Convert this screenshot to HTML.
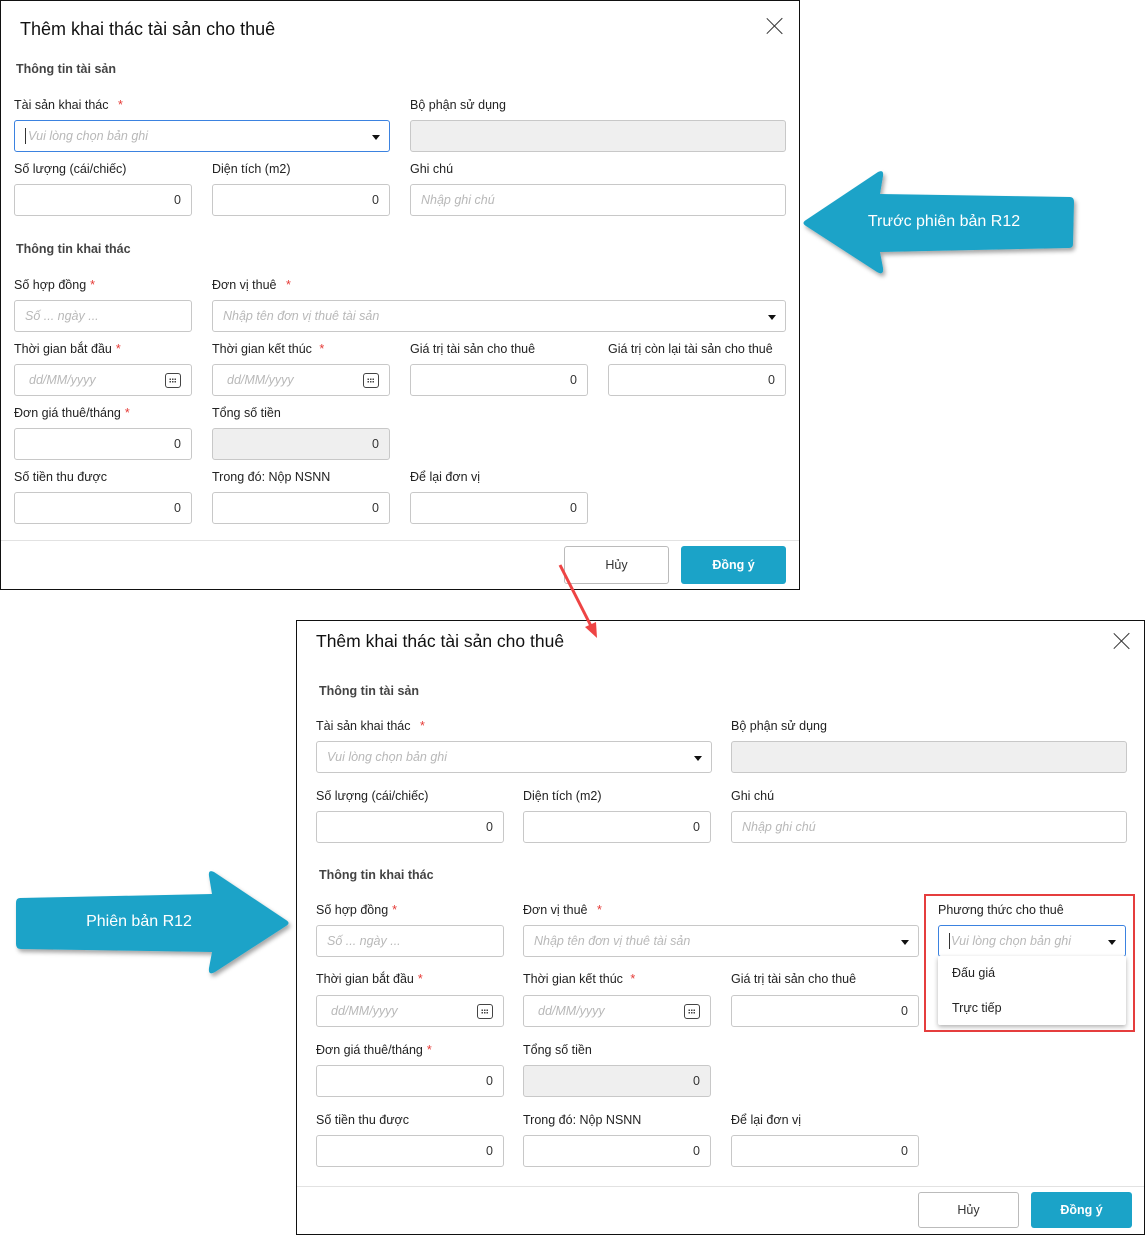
<!DOCTYPE html>
<html><head><meta charset="utf-8"><style>
*{box-sizing:border-box;margin:0;padding:0}
body{width:1145px;height:1235px;position:relative;background:#fff;font-family:"Liberation Sans",Arial,sans-serif;color:#212121;overflow:hidden}
.a{position:absolute}
.dlg{position:absolute;border:1px solid #111;background:#fff}
.t{position:absolute;font-size:18px;color:#111}
.s{position:absolute;font-size:12.5px;font-weight:bold;color:#444}
.l{position:absolute;font-size:12.5px;color:#222;white-space:nowrap}
.l i{color:#e53935;font-style:normal;margin-left:6px}
.f{position:absolute;height:32px;border:1px solid #c8c8c8;border-radius:3px;background:#fff;font-size:12.5px}
.f.g{background:#efefef}
.f.fo{border-color:#3b82e0}
.p{position:absolute;left:10px;top:8px;color:#b8b8b8;font-style:italic;white-space:nowrap}
.n{position:absolute;right:10px;top:8px;color:#333}
.dd{position:absolute;right:9px;top:14px;width:0;height:0;border-left:4px solid transparent;border-right:4px solid transparent;border-top:5px solid #111}
.cal{position:absolute;right:10px;top:8px;width:16px;height:15px;border:1.5px solid #444;border-radius:3px}
.cal:before{content:"";position:absolute;left:3px;top:4px;width:7px;height:5px;background:radial-gradient(circle,#444 0.8px,transparent 1px) 0 0/2.5px 2.5px}
.btn{position:absolute;border-radius:3px;font-size:12.5px;text-align:center}
.hr{position:absolute;height:1px;background:#e2e2e2}
.x{position:absolute;width:18px;height:18px}
.x:before,.x:after{content:"";position:absolute;left:8px;top:-2px;width:1.3px;height:22px;background:#333;transform:rotate(45deg)}
.x:after{transform:rotate(-45deg)}
</style></head><body>

<!-- Dialog 1 -->
<div class="dlg" style="left:0;top:0;width:800px;height:590px"></div>
<div class="t" style="left:20px;top:19px">Thêm khai thác tài sản cho thuê</div>
<div class="x" style="left:766px;top:17px"></div>
<div class="s" style="left:16px;top:62px">Thông tin tài sản</div>
<div class="l" style="left:14px;top:98px">Tài sản khai thác <i>*</i></div>
<div class="l" style="left:410px;top:98px">Bộ phận sử dụng</div>
<div class="f fo" style="left:14px;top:120px;width:376px"><span class="a" style="left:10px;top:7px;width:1px;height:16px;background:#333"></span><span class="p" style="left:13px">Vui lòng chọn bản ghi</span><span class="dd"></span></div>
<div class="f g" style="left:410px;top:120px;width:376px"></div>
<div class="l" style="left:14px;top:162px">Số lượng (cái/chiếc)</div>
<div class="l" style="left:212px;top:162px">Diện tích (m2)</div>
<div class="l" style="left:410px;top:162px">Ghi chú</div>
<div class="f" style="left:14px;top:184px;width:178px"><span class="n">0</span></div>
<div class="f" style="left:212px;top:184px;width:178px"><span class="n">0</span></div>
<div class="f" style="left:410px;top:184px;width:376px"><span class="p">Nhập ghi chú</span></div>
<div class="s" style="left:16px;top:242px">Thông tin khai thác</div>
<div class="l" style="left:14px;top:278px">Số hợp đồng<i style="margin-left:4px">*</i></div>
<div class="l" style="left:212px;top:278px">Đơn vị thuê <i>*</i></div>
<div class="f" style="left:14px;top:300px;width:178px"><span class="p">Số ... ngày ...</span></div>
<div class="f" style="left:212px;top:300px;width:574px"><span class="p">Nhập tên đơn vị thuê tài sản</span><span class="dd"></span></div>
<div class="l" style="left:14px;top:342px">Thời gian bắt đầu<i style="margin-left:4px">*</i></div>
<div class="l" style="left:212px;top:342px">Thời gian kết thúc <i style="margin-left:4px">*</i></div>
<div class="l" style="left:410px;top:342px">Giá trị tài sản cho thuê</div>
<div class="l" style="left:608px;top:342px">Giá trị còn lại tài sản cho thuê</div>
<div class="f" style="left:14px;top:364px;width:178px"><span class="p" style="left:14px">dd/MM/yyyy</span><span class="cal"></span></div>
<div class="f" style="left:212px;top:364px;width:178px"><span class="p" style="left:14px">dd/MM/yyyy</span><span class="cal"></span></div>
<div class="f" style="left:410px;top:364px;width:178px"><span class="n">0</span></div>
<div class="f" style="left:608px;top:364px;width:178px"><span class="n">0</span></div>
<div class="l" style="left:14px;top:406px">Đơn giá thuê/tháng<i style="margin-left:4px">*</i></div>
<div class="l" style="left:212px;top:406px">Tổng số tiền</div>
<div class="f" style="left:14px;top:428px;width:178px"><span class="n">0</span></div>
<div class="f g" style="left:212px;top:428px;width:178px"><span class="n">0</span></div>
<div class="l" style="left:14px;top:470px">Số tiền thu được</div>
<div class="l" style="left:212px;top:470px">Trong đó: Nộp NSNN</div>
<div class="l" style="left:410px;top:470px">Để lại đơn vị</div>
<div class="f" style="left:14px;top:492px;width:178px"><span class="n">0</span></div>
<div class="f" style="left:212px;top:492px;width:178px"><span class="n">0</span></div>
<div class="f" style="left:410px;top:492px;width:178px"><span class="n">0</span></div>
<div class="hr" style="left:1px;top:540px;width:798px"></div>
<div class="btn" style="left:564px;top:546px;width:105px;height:38px;border:1px solid #bbb;line-height:36px;color:#333">Hủy</div>
<div class="btn" style="left:681px;top:546px;width:105px;height:38px;background:#1ba3c8;color:#fff;font-weight:bold;line-height:38px">Đồng ý</div>

<!-- arrow left -->
<svg class="a" style="left:798px;top:164px" width="285" height="118" viewBox="0 0 285 118">
<defs><filter id="sh"><feDropShadow dx="2" dy="3" stdDeviation="2" flood-opacity="0.35"/></filter></defs>
<path d="M8 56 L80 8 Q86 5 85 12 L82 30 L272 33 Q276 33 276 38 L275 80 Q275 84 271 84 L82 88 L85 104 Q86 112 79 108 L8 62 Q3 59 8 56 Z" fill="#1ba3c8" filter="url(#sh)"/>
<text x="146" y="62" fill="#fff" font-family="Liberation Sans, sans-serif" font-size="16" text-anchor="middle">Trước phiên bản R12</text>
</svg>
<!-- arrow right -->
<svg class="a" style="left:10px;top:864px" width="285" height="118" viewBox="0 0 285 118">
<path d="M276 56 L204 8 Q198 5 199 12 L202 30 L10 34 Q6 34 6 39 L6 80 Q6 85 11 85 L202 88 L199 104 Q198 112 205 108 L276 62 Q281 59 276 56 Z" fill="#1ba3c8" filter="url(#sh)"/>
<text x="129" y="62" fill="#fff" font-family="Liberation Sans, sans-serif" font-size="16" text-anchor="middle">Phiên bản R12</text>
</svg>

<!-- Dialog 2 -->
<div class="dlg" style="left:296px;top:620px;width:849px;height:615px"></div>
<div class="t" style="left:316px;top:631px;font-size:17.5px">Thêm khai thác tài sản cho thuê</div>
<div class="x" style="left:1113px;top:632px"></div>
<div class="s" style="left:319px;top:684px">Thông tin tài sản</div>
<div class="l" style="left:316px;top:719px">Tài sản khai thác <i>*</i></div>
<div class="l" style="left:731px;top:719px">Bộ phận sử dụng</div>
<div class="f" style="left:316px;top:741px;width:396px"><span class="p">Vui lòng chọn bản ghi</span><span class="dd"></span></div>
<div class="f g" style="left:731px;top:741px;width:396px"></div>
<div class="l" style="left:316px;top:789px">Số lượng (cái/chiếc)</div>
<div class="l" style="left:523px;top:789px">Diện tích (m2)</div>
<div class="l" style="left:731px;top:789px">Ghi chú</div>
<div class="f" style="left:316px;top:811px;width:188px"><span class="n">0</span></div>
<div class="f" style="left:523px;top:811px;width:188px"><span class="n">0</span></div>
<div class="f" style="left:731px;top:811px;width:396px"><span class="p">Nhập ghi chú</span></div>
<div class="s" style="left:319px;top:868px">Thông tin khai thác</div>
<div class="l" style="left:316px;top:903px">Số hợp đồng<i style="margin-left:4px">*</i></div>
<div class="l" style="left:523px;top:903px">Đơn vị thuê <i>*</i></div>
<div class="l" style="left:938px;top:903px">Phương thức cho thuê</div>
<div class="f" style="left:316px;top:925px;width:188px"><span class="p">Số ... ngày ...</span></div>
<div class="f" style="left:523px;top:925px;width:396px"><span class="p">Nhập tên đơn vị thuê tài sản</span><span class="dd"></span></div>
<div class="f fo" style="left:938px;top:925px;width:188px"><span class="a" style="left:10px;top:7px;width:1px;height:16px;background:#333"></span><span class="p" style="left:12px">Vui lòng chọn bản ghi</span><span class="dd"></span></div>
<div class="l" style="left:316px;top:972px">Thời gian bắt đầu<i style="margin-left:4px">*</i></div>
<div class="l" style="left:523px;top:972px">Thời gian kết thúc <i style="margin-left:4px">*</i></div>
<div class="l" style="left:731px;top:972px">Giá trị tài sản cho thuê</div>
<div class="f" style="left:316px;top:995px;width:188px"><span class="p" style="left:14px">dd/MM/yyyy</span><span class="cal"></span></div>
<div class="f" style="left:523px;top:995px;width:188px"><span class="p" style="left:14px">dd/MM/yyyy</span><span class="cal"></span></div>
<div class="f" style="left:731px;top:995px;width:188px"><span class="n">0</span></div>
<div class="a" style="left:938px;top:956px;width:188px;height:69px;background:#fff;box-shadow:0 2px 5px rgba(0,0,0,.3);border-radius:2px"></div>
<div class="l" style="left:952px;top:966px">Đấu giá</div>
<div class="l" style="left:952px;top:1001px">Trực tiếp</div>
<div class="a" style="left:924px;top:894px;width:211px;height:138px;border:2px solid #e53e3e"></div>
<div class="l" style="left:316px;top:1043px">Đơn giá thuê/tháng<i style="margin-left:4px">*</i></div>
<div class="l" style="left:523px;top:1043px">Tổng số tiền</div>
<div class="f" style="left:316px;top:1065px;width:188px"><span class="n">0</span></div>
<div class="f g" style="left:523px;top:1065px;width:188px"><span class="n">0</span></div>
<div class="l" style="left:316px;top:1113px">Số tiền thu được</div>
<div class="l" style="left:523px;top:1113px">Trong đó: Nộp NSNN</div>
<div class="l" style="left:731px;top:1113px">Để lại đơn vị</div>
<div class="f" style="left:316px;top:1135px;width:188px"><span class="n">0</span></div>
<div class="f" style="left:523px;top:1135px;width:188px"><span class="n">0</span></div>
<div class="f" style="left:731px;top:1135px;width:188px"><span class="n">0</span></div>
<div class="hr" style="left:297px;top:1186px;width:847px"></div>
<div class="btn" style="left:918px;top:1192px;width:101px;height:36px;border:1px solid #bbb;line-height:34px;color:#333">Hủy</div>
<div class="btn" style="left:1031px;top:1192px;width:101px;height:36px;background:#1ba3c8;color:#fff;font-weight:bold;line-height:36px">Đồng ý</div>

<!-- red arrow (on top) -->
<svg class="a" style="left:550px;top:560px;z-index:5" width="60" height="85" viewBox="0 0 60 85">
<line x1="10" y1="5" x2="42" y2="68" stroke="#ee4444" stroke-width="3"/>
<path d="M47 78 L35 67 L46 62 Z" fill="#ee4444"/>
</svg>
</body></html>
